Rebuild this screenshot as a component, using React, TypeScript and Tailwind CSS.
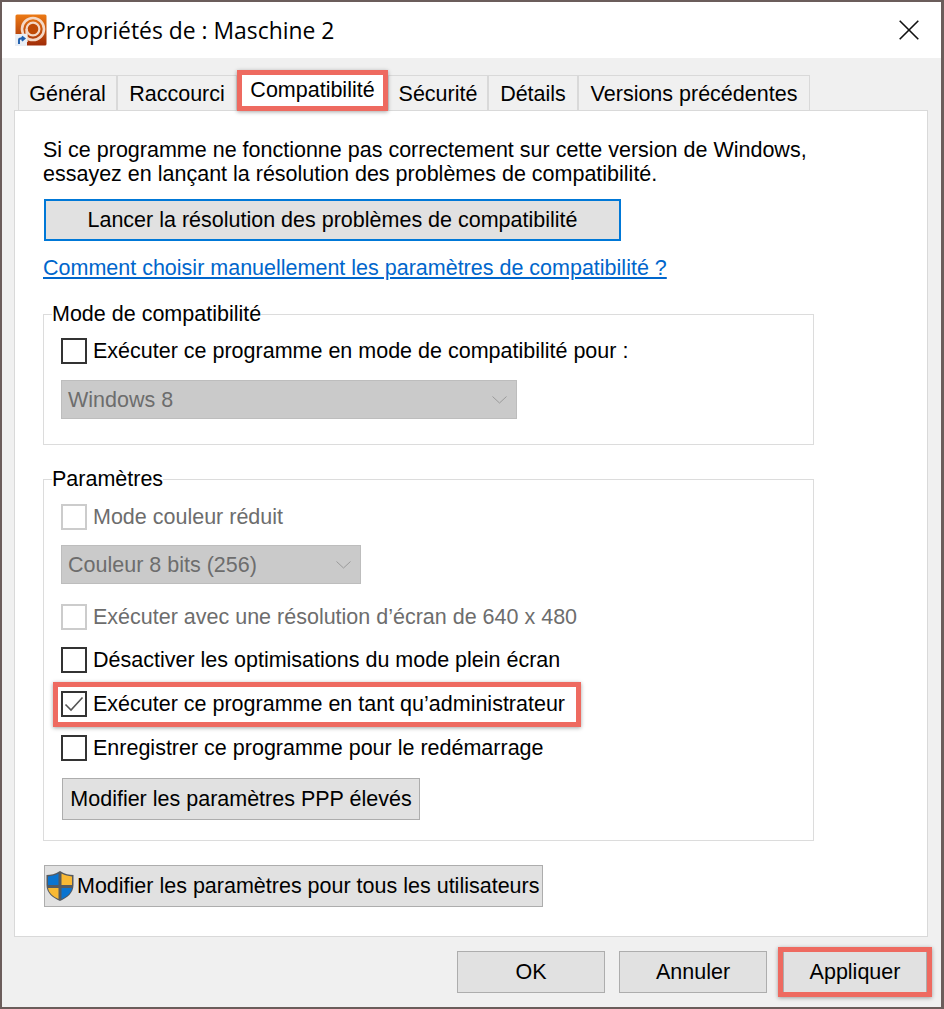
import React from "react";

const tabs = [
  { label: "Général", w: "w-[99px]" },
  { label: "Raccourci", w: "w-[120px]" },
  { label: "Compatibilité", w: "w-[151px]", active: true },
  { label: "Sécurité", w: "w-[100px]" },
  { label: "Détails", w: "w-[90px]" },
  { label: "Versions précédentes", w: "w-[232px]" },
];

function Check({ label, checked, disabled, className = "" }: { label: string; checked?: boolean; disabled?: boolean; className?: string }) {
  return (
    <div className={`flex items-center h-[26px] ${className}`}>
      <div className={`w-[26px] h-[26px] border-2 bg-white shrink-0 flex items-center justify-center ${disabled ? "border-[#cccccc]" : "border-[#333333]"}`}>
        {checked && (
          <svg width="20" height="16" viewBox="0 0 20 16" fill="none">
            <path d="M1.5 8.5 L7 14 L18.5 1.5" stroke="#555555" strokeWidth="1.6" />
          </svg>
        )}
      </div>
      <span className={`ml-[6px] whitespace-nowrap ${disabled ? "text-[#6d6d6d]" : "text-black"}`}>{label}</span>
    </div>
  );
}

function Dropdown({ label, w, className = "" }: { label: string; w: string; className?: string }) {
  return (
    <div className={`${w} h-[39px] flex items-center justify-between bg-[#cacaca] border border-[#bdbdbd] pl-[6px] pr-[9px] text-[#6d6d6d] ${className}`}>
      <span>{label}</span>
      <svg width="15" height="8" viewBox="0 0 15 8" fill="none">
        <path d="M0.5 0.5 L7.5 7 L14.5 0.5" stroke="#9a9a9a" strokeWidth="1" />
      </svg>
    </div>
  );
}

function Button({ children, className = "" }: { children: React.ReactNode; className?: string }) {
  return (
    <button className={`flex items-center h-[42px] bg-[#e1e1e1] text-black whitespace-nowrap ${className}`}>
      {children}
    </button>
  );
}

function Shield() {
  return (
    <svg width="30" height="32" viewBox="0 0 30 32" className="shrink-0">
      <path d="M15 1 C10 4 6 5 1.5 5 V15 C1.5 23 8 28 15 31 C22 28 28.5 23 28.5 15 V5 C24 5 20 4 15 1Z" fill="#555a60" />
      <path d="M13.5 3.6 C10 5.4 6.6 6.3 3 6.5 V15 H13.5Z" fill="#0a74d0" />
      <path d="M16.5 3.6 C20 5.4 23.4 6.3 27 6.5 V15 H16.5Z" fill="#f9b934" />
      <path d="M3 18 C3.8 23 8 26.6 13.5 29 V18Z" fill="#f9b934" />
      <path d="M27 18 C26.2 23 22 26.6 16.5 29 V18Z" fill="#0a74d0" />
    </svg>
  );
}

function AppIcon() {
  return (
    <svg width="32" height="32" viewBox="0 0 32 32" className="shrink-0">
      <defs>
        <linearGradient id="appBg" x1="0" y1="0" x2="0" y2="1">
          <stop offset="0" stopColor="#ec7a14" />
          <stop offset="1" stopColor="#a02c08" />
        </linearGradient>
      </defs>
      <rect x="0.5" y="0.5" width="31" height="31" rx="1.5" fill="url(#appBg)" />
      <circle cx="18" cy="15" r="11" fill="none" stroke="#f4d8c6" strokeWidth="2.6" />
      <circle cx="18" cy="15" r="6.4" fill="#bf4a06" stroke="#f4d8c6" strokeWidth="2.2" />
      <path d="M11.6 15 V28" stroke="#f4d8c6" strokeWidth="2.4" />
      <rect x="0" y="20" width="12" height="12" fill="#e9eef5" />
      <path d="M4 30 V26 Q4 24.5 6 24.5 H8.5 M6.8 22.5 L9.5 24.5 L6.8 26.8" fill="none" stroke="#1e5fae" strokeWidth="1.9" />
    </svg>
  );
}

export default function App() {
  return (
    <div className="w-[944px] h-[1009px] bg-[#6b5d5b] pt-[2px] pl-[2px] pr-[3px] pb-[2px] font-['Liberation_Sans',Arial,sans-serif] text-[21.5px] leading-[24px]">
      <div className="h-full flex flex-col bg-[#f0f0f0]">
        {/* Title bar */}
        <div className="h-[56px] shrink-0 bg-white flex items-center pl-[13px] pr-[22px]">
          <AppIcon />
          <span className="ml-[5px] mt-[2px] text-[22.9px] font-['Open_Sans',sans-serif] text-black">Propriétés de : Maschine 2</span>
          <svg width="20" height="20" viewBox="0 0 20 20" className="ml-auto" fill="none">
            <path d="M0.7 0.7 L19.3 19.3 M19.3 0.7 L0.7 19.3" stroke="#111111" strokeWidth="1.6" />
          </svg>
        </div>

        {/* Tabs */}
        <div className="flex pl-[16px] pt-[17px] h-[52px] shrink-0">
          {tabs.map((t) => (
            <div
              key={t.label}
              className={
                t.active
                  ? `${t.w} relative z-10 -mt-[5px] -mb-[1px] h-[41px] pb-[2px] flex items-center justify-center bg-white border-[5px] border-[#ee6a60] shadow-[0_1px_4px_rgba(0,0,0,0.35)]`
                  : `${t.w} h-[35px] pt-[2px] flex items-center justify-center border border-b-0 border-[#d9d9d9]`
              }
            >
              {t.label}
            </div>
          ))}
        </div>

        {/* Tab panel */}
        <div className="ml-[12px] w-[914px] h-[827px] shrink-0 bg-white border border-[#d9d9d9] pl-[28px] pt-[27px]">
          <p className="text-black whitespace-nowrap">
            Si ce programme ne fonctionne pas correctement sur cette version de Windows,
            <br />
            essayez en lançant la résolution des problèmes de compatibilité.
          </p>
          <Button className="w-[577px] mt-[13px] ml-[1px] justify-center border-2 border-[#0078d7]">Lancer la résolution des problèmes de compatibilité</Button>
          <a className="block mt-[15px] text-[#0066cc] underline whitespace-nowrap" href="#">
            Comment choisir manuellement les paramètres de compatibilité ?
          </a>

          <fieldset className="mt-[22px] w-[771px] h-[143px] border border-[#dcdcdc] pl-[17px]">
            <legend className="-ml-[9px] p-0 text-black">Mode de compatibilité</legend>
            <Check label="Exécuter ce programme en mode de compatibilité pour :" className="mt-[12px]" />
            <Dropdown label="Windows 8" w="w-[456px]" className="mt-[16px]" />
          </fieldset>

          <fieldset className="mt-[22px] w-[771px] h-[374px] border border-[#dcdcdc] pl-[17px]">
            <legend className="-ml-[9px] p-0 text-black">Paramètres</legend>
            <Check label="Mode couleur réduit" disabled className="mt-[13px]" />
            <Dropdown label="Couleur 8 bits (256)" w="w-[300px]" className="mt-[15px]" />
            <Check label="Exécuter avec une résolution d’écran de 640 x 480" disabled className="mt-[20px]" />
            <Check label="Désactiver les optimisations du mode plein écran" className="mt-[17px]" />
            <div className="relative mt-[18px]">
              <Check label="Exécuter ce programme en tant qu’administrateur" checked />
              <div className="absolute -left-[8px] -top-[9px] w-[528px] h-[45px] border-[5px] border-[#ee6a60] shadow-[0_1px_4px_rgba(0,0,0,0.35)]" />
            </div>
            <Check label="Enregistrer ce programme pour le redémarrage" className="mt-[18px]" />
            <Button className="w-[358px] mt-[17px] ml-[1px] justify-center border border-[#adadad]">Modifier les paramètres PPP élevés</Button>
          </fieldset>

          <Button className="w-[499px] mt-[24px] ml-[1px] border border-[#adadad]">
            <Shield />
            <span className="ml-[2px]">Modifier les paramètres pour tous les utilisateurs</span>
          </Button>
        </div>

        {/* Footer buttons */}
        <div className="flex pl-[455px] pt-[14px]">
          <Button className="w-[148px] justify-center border border-[#adadad]">OK</Button>
          <Button className="w-[148px] ml-[14px] justify-center border border-[#adadad]">Annuler</Button>
          <div className="relative ml-[16px]">
            <Button className="w-[144px] justify-center border border-[#adadad]">Appliquer</Button>
            <div className="absolute -left-[5px] -top-[4px] w-[154px] h-[50px] border-[5px] border-[#ee6a60] shadow-[0_1px_4px_rgba(0,0,0,0.35)]" />
          </div>
        </div>
      </div>
    </div>
  );
}
